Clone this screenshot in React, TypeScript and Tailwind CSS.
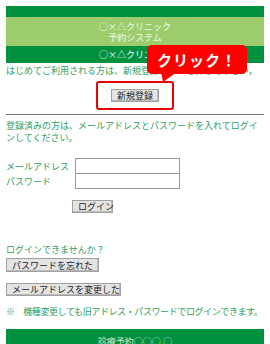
export default function App() {
  const btn =
    'h-[13px] whitespace-nowrap border border-[#a0a0a0] bg-[#e4e4e4] px-[5px] text-[9px] leading-[11px] text-[#222] shadow-[inset_-1px_-1px_0_#bbb]';

  return (
    <div className="relative h-[344px] overflow-hidden bg-white px-[6px] pt-[6px] font-['Noto_Sans_CJK_JP',sans-serif] text-[9px] leading-[12px] text-[#2f9e5e]">
      <div className="h-[11px] bg-[#00913f]" />
      <div className="flex h-[29px] flex-col items-center justify-center bg-[#9ccc6c] leading-[11px] text-[#f4fbe9]">
        <div>○×△クリニック</div>
        <div>予約システム</div>
      </div>
      <div className="flex h-[17px] items-center justify-center bg-[#00913f] text-white">
        ○×△クリニック
      </div>

      <p className="mt-[2px] whitespace-nowrap">はじめてご利用される方は、新規登録ボタンを押して下さい。</p>

      <div className="mt-[4px] flex justify-center">
        <div className="flex h-[29px] w-[78px] items-center justify-center rounded-[3px] border-2 border-[#ee0000]">
          <button className={btn}>新規登録</button>
        </div>
      </div>

      <div className="mt-[4px] h-[1px] bg-[#777]" />

      <p className="mt-[5px]">
        登録済みの方は、メールアドレスとパスワードを入れてログインしてください。
      </p>

      <div className="mt-[14px] grid grid-cols-[69px_105px] items-center">
        <span className="leading-[15px]">メールアドレス</span>
        <div className="h-[16px] border border-[#999] bg-white" />
        <span className="leading-[15px]">パスワード</span>
        <div className="h-[15px] border border-t-0 border-[#999] bg-white" />
      </div>

      <div className="mt-[11px] pl-[66px]">
        <button className={btn + ' w-[41px] px-0'}>ログイン</button>
      </div>

      <p className="mt-[31px]">ログインできませんか？</p>
      <button className={btn + ' mt-[2px] block h-[14px] w-[93px] text-left'}>パスワードを忘れた</button>
      <button className={btn + ' mt-[11px] block w-[115px] text-left'}>メールアドレスを変更した</button>

      <p className="mt-[10px] whitespace-nowrap tracking-[-0.4px]">※　機種変更しても旧アドレス・パスワードでログインできます。</p>

      <div className="mt-[11px] flex h-[18px] items-start justify-center bg-[#00913f] pt-[7px] text-[9px] leading-[11px] text-[#cfe9d5]">
        診療予約○○○.○
      </div>

      <div className="absolute left-[147px] top-[45px]">
        <div className="flex h-[29px] w-[100px] items-center justify-center rounded-[5px] bg-[#ff0000] text-[15px] font-bold leading-none tracking-[1px] text-white">
          クリック！
        </div>
        <svg className="absolute left-[12px] top-[27px]" width="22" height="12" viewBox="0 0 22 12">
          <path d="M2 0 L18 0 L4 10 Z" fill="#ff0000" />
        </svg>
      </div>
    </div>
  );
}
